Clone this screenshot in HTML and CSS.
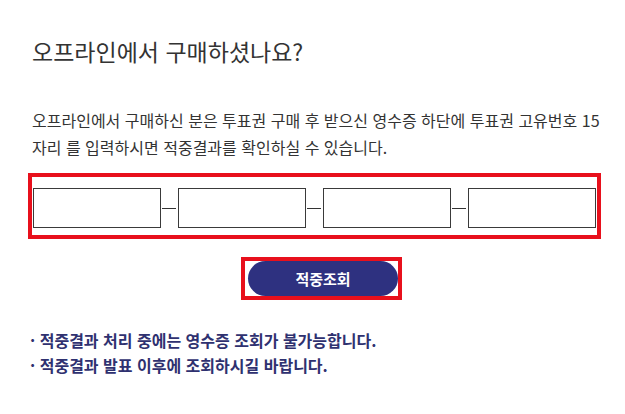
FILE: index.html
```html
<!DOCTYPE html>
<html lang="ko">
<head>
<meta charset="utf-8">
<link rel="stylesheet" href="styles.css">
</head>
<body>
<div class="page">
  <h2 class="title">오프라인에서 구매하셨나요?</h2>
  <p class="desc">오프라인에서 구매하신 분은 투표권 구매 후 받으신 영수증 하단에 투표권 고유번호 15<br>자리 를 입력하시면 적중결과를 확인하실 수 있습니다.</p>
  <div class="code-box">
    <div class="code-row">
      <input class="code-input" type="text" aria-label="번호 1">
      <span class="dash"></span>
      <input class="code-input" type="text" aria-label="번호 2">
      <span class="dash"></span>
      <input class="code-input" type="text" aria-label="번호 3">
      <span class="dash"></span>
      <input class="code-input" type="text" aria-label="번호 4">
    </div>
  </div>
  <div class="btn-wrap">
    <button class="btn" type="button">적중조회</button>
  </div>
  <ul class="notes">
    <li>· 적중결과 처리 중에는 영수증 조회가 불가능합니다.</li>
    <li>· 적중결과 발표 이후에 조회하시길 바랍니다.</li>
  </ul>
</div>
</body>
</html>
```
FILE: styles.css
```css
* { box-sizing: border-box; }
html, body { margin: 0; padding: 0; background: #fff; }
body {
  font-family: "Noto Sans CJK KR", "Noto Sans", sans-serif;
  color: #333;
}
.page {
  padding: 36px 0 0 28px;
  width: 625px;
}
.title {
  margin: 0;
  padding-left: 4px;
  font-size: 23px;
  line-height: 30px;
  font-weight: 400;
  color: #333;
}
.desc {
  margin: 41px 0 0;
  padding-left: 4px;
  font-size: 16px;
  line-height: 27px;
  color: #333;
  white-space: nowrap;
}
.code-box {
  margin-top: 12px;
  width: 573px;
  height: 66px;
  border: 4px solid #e8101c;
  padding: 11px 1px 0 1px;
}
.code-row {
  display: flex;
  align-items: center;
}
.code-input {
  width: 128px;
  height: 40px;
  margin: 0;
  border: 1px solid #3a3a3a;
  border-radius: 0;
  background: #fff;
  padding: 0 8px;
  font: inherit;
}
.dash {
  display: block;
  width: 14px;
  height: 1px;
  margin: 0 2px 0 1px;
  background: #333;
}
.btn-wrap {
  margin: 18px 0 0 213px;
  width: 161px;
  height: 43px;
  border: 4px solid #e8101c;
  padding: 0 0 0 3px;
  display: flex;
  align-items: center;
}
.btn {
  width: 150px;
  height: 35px;
  border: 0;
  border-radius: 18px;
  background: #2e3180;
  color: #fff;
  font-family: inherit;
  font-size: 15px;
  font-weight: 700;
  cursor: pointer;
}
.notes {
  list-style: none;
  margin: 28px 0 0;
  padding: 0 0 0 2px;
  font-size: 16px;
  line-height: 25px;
  font-weight: 700;
  color: #2f3170;
}
.notes li { margin: 0; }
```
